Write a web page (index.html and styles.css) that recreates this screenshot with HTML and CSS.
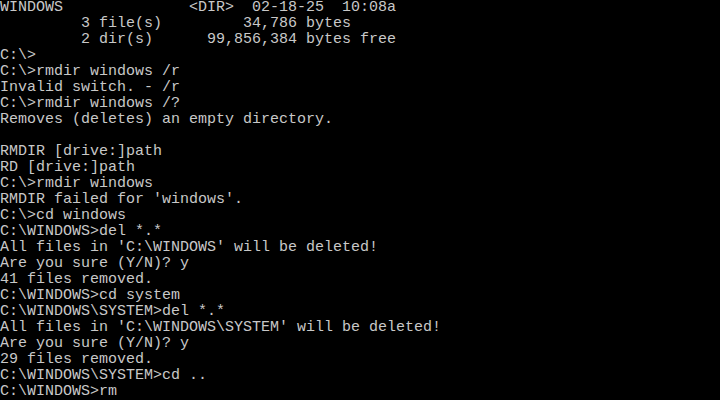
FILE: index.html
```html
<!DOCTYPE html>
<html lang="en">
<head>
  <meta charset="UTF-8">
  <meta name="viewport" content="width=device-width, initial-scale=1.0">
  <title>MS-DOS Prompt</title>
  <link rel="stylesheet" href="styles.css">
</head>
<body>
  <!-- 80x25 text mode screen -->
  <pre class="screen">WINDOWS              &lt;DIR&gt;  02-18-25  10:08a
         3 file(s)         34,786 bytes
         2 dir(s)      99,856,384 bytes free
C:\&gt;
C:\&gt;rmdir windows /r
Invalid switch. - /r
C:\&gt;rmdir windows /?
Removes (deletes) an empty directory.

RMDIR [drive:]path
RD [drive:]path
C:\&gt;rmdir windows
RMDIR failed for 'windows'.
C:\&gt;cd windows
C:\WINDOWS&gt;del *.*
All files in 'C:\WINDOWS' will be deleted!
Are you sure (Y/N)? y
41 files removed.
C:\WINDOWS&gt;cd system
C:\WINDOWS\SYSTEM&gt;del *.*
All files in 'C:\WINDOWS\SYSTEM' will be deleted!
Are you sure (Y/N)? y
29 files removed.
C:\WINDOWS\SYSTEM&gt;cd ..
C:\WINDOWS&gt;rm</pre>
</body>
</html>
```

FILE: styles.css
```css
html, body {
  margin: 0;
  background: #000;
}

body {
  width: 720px;
  height: 400px;
  overflow: hidden;
}

.screen {
  margin: 0;
  padding: 0;
  color: #c8c8c8;
  font-family: 'Liberation Mono', 'DejaVu Sans Mono', monospace;
  font-size: 15px;
  line-height: 16px;
  white-space: pre;
}
```
